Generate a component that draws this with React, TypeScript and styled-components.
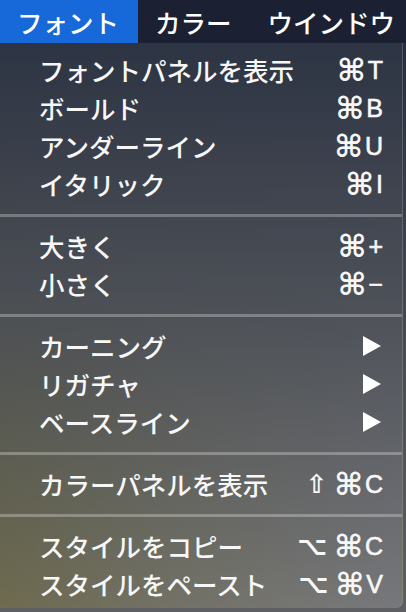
import React from 'react';
import styled, { createGlobalStyle } from 'styled-components';

type Entry =
    | { kind: 'item'; label: string; mods?: string[]; keyName?: string; submenu?: boolean }
    | { kind: 'separator' };

const entries: Entry[] = [
    { kind: 'item', label: 'フォントパネルを表示', mods: ['⌘'], keyName: 'T' },
    { kind: 'item', label: 'ボールド', mods: ['⌘'], keyName: 'B' },
    { kind: 'item', label: 'アンダーライン', mods: ['⌘'], keyName: 'U' },
    { kind: 'item', label: 'イタリック', mods: ['⌘'], keyName: 'I' },
    { kind: 'separator' },
    { kind: 'item', label: '大きく', mods: ['⌘'], keyName: '+' },
    { kind: 'item', label: '小さく', mods: ['⌘'], keyName: '−' },
    { kind: 'separator' },
    { kind: 'item', label: 'カーニング', submenu: true },
    { kind: 'item', label: 'リガチャ', submenu: true },
    { kind: 'item', label: 'ベースライン', submenu: true },
    { kind: 'separator' },
    { kind: 'item', label: 'カラーパネルを表示', mods: ['⇧', '⌘'], keyName: 'C' },
    { kind: 'separator' },
    { kind: 'item', label: 'スタイルをコピー', mods: ['⌥', '⌘'], keyName: 'C' },
    { kind: 'item', label: 'スタイルをペースト', mods: ['⌥', '⌘'], keyName: 'V' },
];

const titles = ['フォント', 'カラー', 'ウインドウ'];

const SubmenuArrow: React.FC = () => (
    <svg width="20" height="20" viewBox="0 0 20 20">
        <polygon points="1,0 19,10 1,20" fill="#ffffff" />
    </svg>
);

const App: React.FC = () => {
    return (
        <Screen>
            <GlobalStyle />
            <MenuBar>
                {titles.map((t, i) => (
                    <MenuTitle key={t} $active={i === 0}>{t}</MenuTitle>
                ))}
            </MenuBar>
            <Dropdown>
                {entries.map((e, i) =>
                    e.kind === 'separator' ? (
                        <Separator key={i} />
                    ) : (
                        <Item key={i}>
                            <Label>{e.label}</Label>
                            {e.submenu ? (
                                <ArrowSlot><SubmenuArrow /></ArrowSlot>
                            ) : (
                                <Shortcut>
                                    {e.mods?.map((m) => (
                                        <Mod key={m} $small={m !== '⌘'}>{m}</Mod>
                                    ))}
                                    <KeyName>{e.keyName}</KeyName>
                                </Shortcut>
                            )}
                        </Item>
                    )
                )}
            </Dropdown>
        </Screen>
    );
};
export default App;

const GlobalStyle = createGlobalStyle`
    html, body {
        margin: 0;
        padding: 0;
    }
    body {
        background: linear-gradient(180deg, #23293a 0%, #4a4d55 60%, #5e5f62 100%);
        font-family: "Noto Sans CJK JP", "Noto Sans", sans-serif;
        color: #ffffff;
    }
`;

const Screen = styled.div`
    display: flex;
    flex-direction: column;
    width: 406px;
    height: 612px;
    overflow: hidden;
`;

const MenuBar = styled.div`
    display: flex;
    height: 43px;
    flex-shrink: 0;
    background: #1b2033;
`;

const MenuTitle = styled.div<{ $active?: boolean }>`
    display: flex;
    align-items: center;
    padding: 0 19px 0 17px;
    font-size: 25.5px;
    font-weight: 500;
    line-height: 1;
    white-space: nowrap;
    color: #ffffff;
    background: ${(p) => (p.$active ? '#1768d8' : 'transparent')};
`;

const Dropdown = styled.div`
    display: flex;
    flex-direction: column;
    width: 402px;
    padding: 8px 0 5px;
    border-right: 1px solid rgba(255, 255, 255, 0.18);
    border-bottom-right-radius: 7px;
    background:
        linear-gradient(180deg, #2d3443 0%, rgba(72, 76, 84, 0.92) 45%, rgba(110, 110, 112, 0) 100%),
        linear-gradient(90deg, #6e6b4f 0%, #737267 45%, #77787c 100%);
`;

const Item = styled.div`
    display: flex;
    align-items: center;
    justify-content: space-between;
    height: 38px;
    padding: 0 19px 0 39px;
`;

const Label = styled.span`
    font-size: 25.5px;
    font-weight: 500;
    line-height: 1;
    white-space: nowrap;
    color: #f7f7f7;
`;

const Shortcut = styled.span`
    display: flex;
    align-items: center;
    gap: 2px;
    line-height: 1;
    white-space: nowrap;
    color: #f7f7f7;
`;

const Mod = styled.span<{ $small?: boolean }>`
    font-family: "DejaVu Sans", sans-serif;
    font-size: ${(p) => (p.$small ? '26px' : '31px')};
    font-weight: 700;
    margin-right: ${(p) => (p.$small ? '5px' : '0')};
`;

const KeyName = styled.span`
    font-family: "Liberation Sans", "DejaVu Sans", sans-serif;
    font-size: 25px;
    font-weight: 400;
    -webkit-text-stroke: 0.6px #f7f7f7;
`;

const ArrowSlot = styled.span`
    display: flex;
    align-items: center;
    margin-right: 1px;
`;

const Separator = styled.div`
    display: flex;
    align-items: center;
    height: 24px;

    &::after {
        content: '';
        flex: 1;
        height: 3px;
        background: rgba(255, 255, 255, 0.28);
    }
`;
